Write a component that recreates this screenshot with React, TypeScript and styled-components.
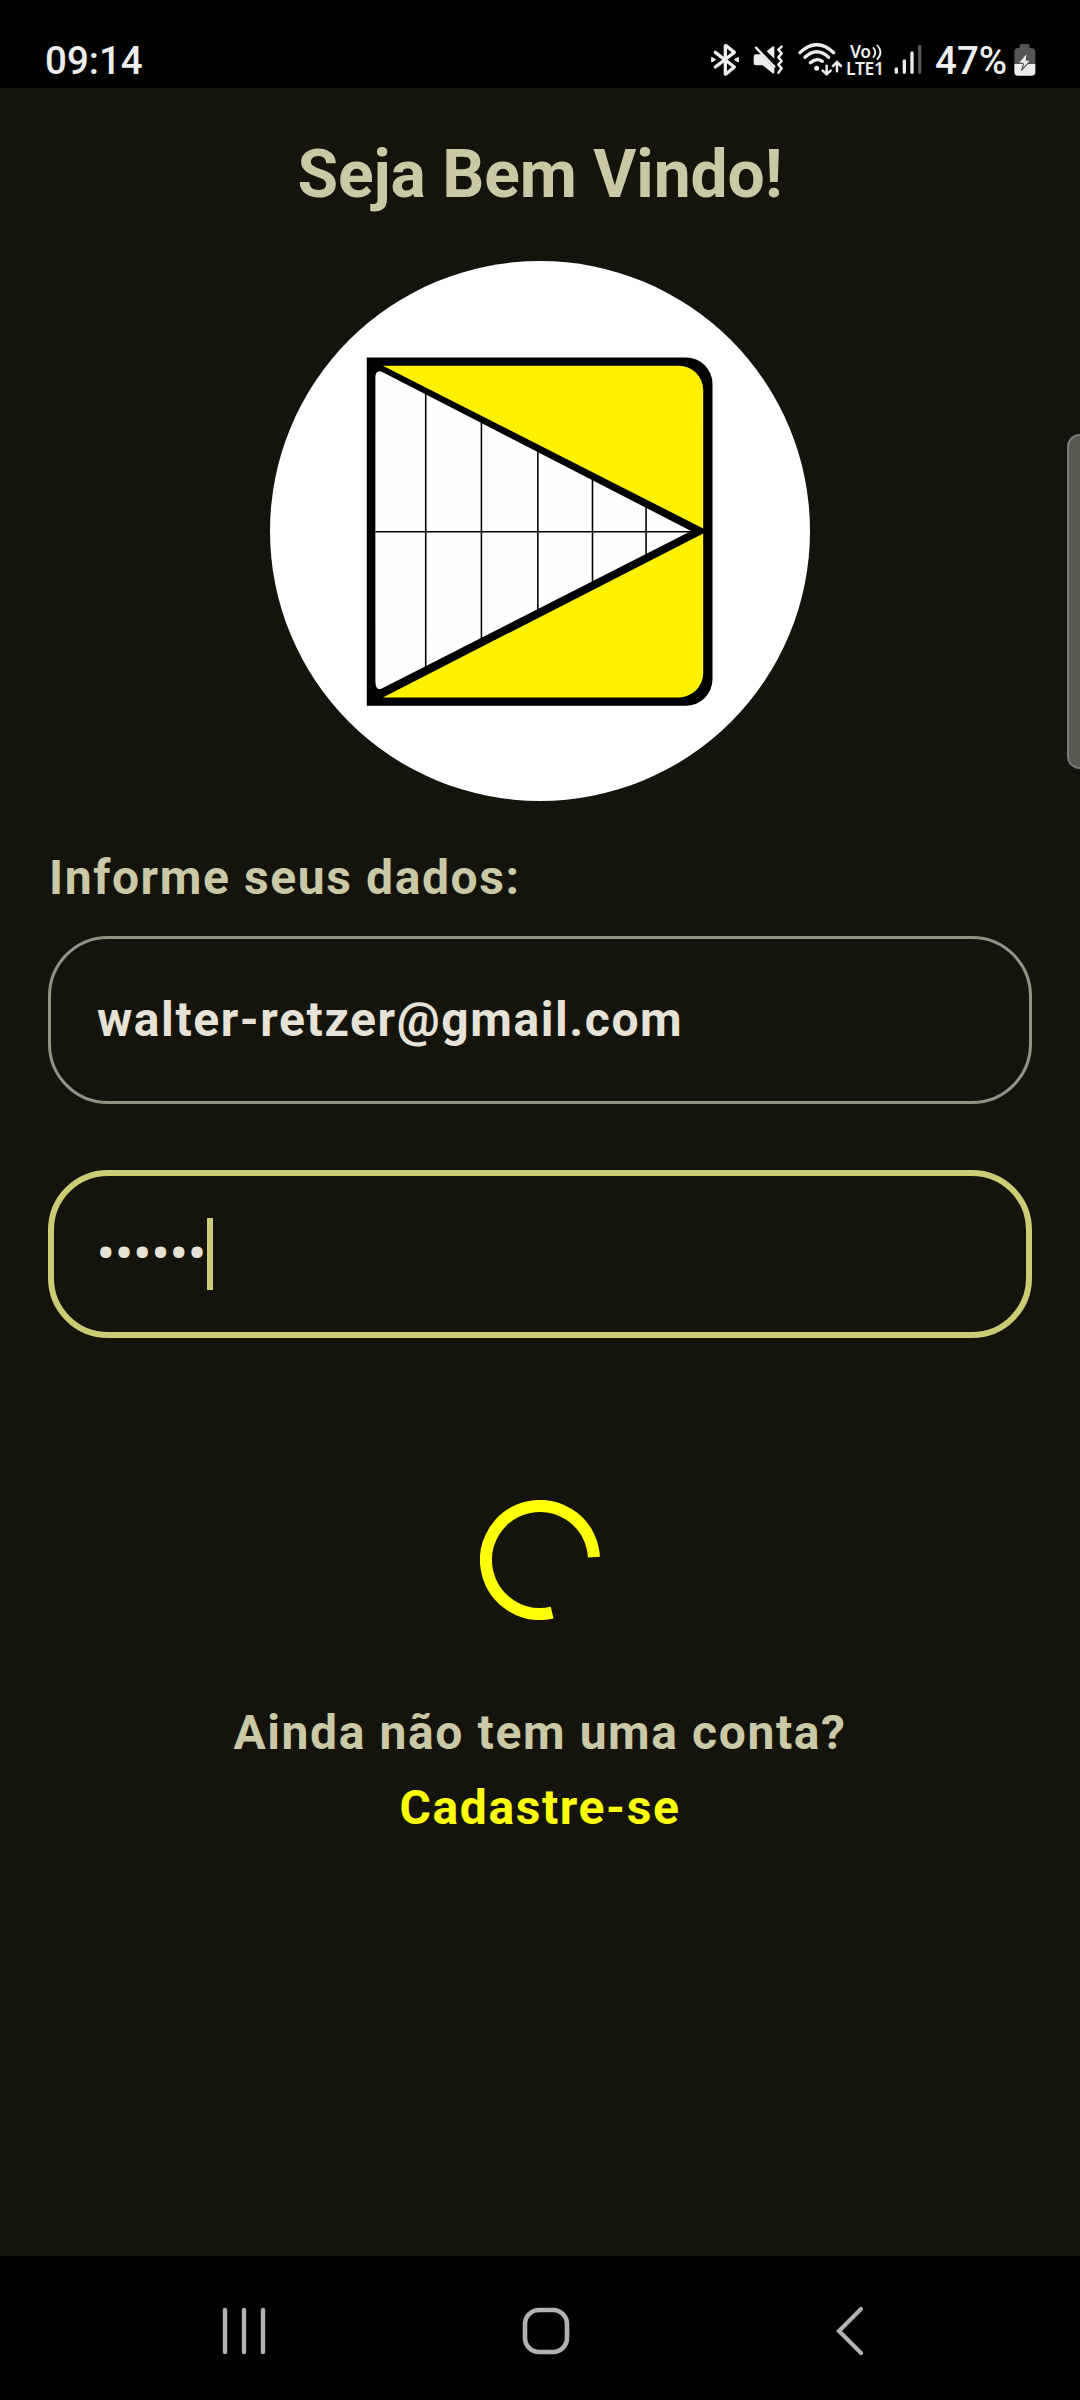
import React from "react";
import styled, { createGlobalStyle } from "styled-components";

const GlobalStyle = createGlobalStyle`
  *, *::before, *::after { box-sizing: border-box; }
  html, body { margin: 0; padding: 0; background: #000; }
  body { font-family: Roboto, "Noto Sans", sans-serif; }
`;

const Screen = styled.div`
  position: relative;
  display: flex;
  flex-direction: column;
  width: 1080px;
  height: 2400px;
  overflow: hidden;
  background: #000;
`;

const StatusBar = styled.header`
  display: flex;
  align-items: center;
  justify-content: space-between;
  flex: none;
  height: 88px;
  padding: 32px 44px 0 45px;
  color: #ededed;
`;

const StatusText = styled.span<{ $width: number }>`
  width: ${(p) => p.$width}px;
  margin-top: 2px;
  font-size: 38.5px;
  font-weight: 500;
  line-height: 46px;
  white-space: nowrap;
`;

const StatusIcons = styled.div`
  display: flex;
  align-items: center;
  height: 46px;
`;

const Glyph = styled.svg<{ $gap: number }>`
  display: block;
  flex: none;
  margin-right: ${(p) => p.$gap}px;
`;

const Volte = styled.div`
  display: flex;
  flex-direction: column;
  width: 40px;
  height: 34px;
  margin-right: 8px;
  font-family: "Noto Sans", sans-serif;
  font-size: 17.5px;
  font-weight: 600;
  line-height: 17px;
  white-space: nowrap;
`;

const VolteTop = styled.div`
  display: flex;
  align-items: center;
  gap: 1px;
  height: 17px;
  padding-left: 4px;
  letter-spacing: -0.4px;
`;

const VolteBottom = styled.div`
  height: 17px;
  letter-spacing: -0.3px;
`;

const Content = styled.main`
  display: flex;
  flex-direction: column;
  align-items: center;
  flex: 1;
  padding: 0 48px;
  background: #14140c;
`;

const Title = styled.h1`
  margin: 45px 0 0;
  font-size: 66px;
  font-weight: 700;
  line-height: 84px;
  letter-spacing: -0.08px;
  color: #cac8a5;
  white-space: nowrap;
`;

const Logo = styled.svg`
  display: block;
  width: 540px;
  height: 540px;
  margin-top: 44px;
  border-radius: 50%;
  background: #fff;
`;

const Form = styled.form`
  display: flex;
  flex-direction: column;
  width: 100%;
  margin-top: 39px;
`;

const BodyText = styled.p<{ $color?: string }>`
  margin: 0;
  font-size: 48px;
  font-weight: 700;
  line-height: 75px;
  letter-spacing: 1.6px;
  white-space: nowrap;
  color: ${(p) => p.$color ?? "#cac8a5"};
`;

const Label = styled(BodyText)`
  padding-left: 1px;
`;

const Value = styled(BodyText)<{ $masked?: boolean }>`
  padding-left: 1px;
  margin-bottom: 1px;
  letter-spacing: ${(p) => (p.$masked ? 1 : 1.58)}px;
`;

const Field = styled.div<{ $focused?: boolean }>`
  display: flex;
  align-items: center;
  height: 168px;
  margin-top: ${(p) => (p.$focused ? 66 : 21)}px;
  padding-left: ${(p) => (p.$focused ? 42 : 45)}px;
  border: ${(p) => (p.$focused ? "6px solid #cccb76" : "3px solid #929282")};
  border-radius: 60px;
`;

const Caret = styled.span`
  width: 6px;
  height: 72px;
  background: #cccb76;
`;

const Spinner = styled.svg`
  display: block;
  width: 120px;
  height: 120px;
  margin: 162px 0 75px;
`;

const EdgeHandle = styled.div`
  position: absolute;
  top: 434px;
  right: -12px;
  width: 25px;
  height: 335px;
  border: 2px solid #7b7b77;
  border-radius: 13px;
  background: #585951;
`;

const NavBar = styled.nav`
  display: flex;
  align-items: center;
  flex: none;
  height: 144px;
  padding: 6px 0 0 221px;
`;

const BluetoothIcon = () => (
  <Glyph $gap={14} width="28" height="34" viewBox="64 69 84 102">
    <g fill="none" stroke="#ededed" strokeWidth="10" strokeLinejoin="round" strokeLinecap="round">
      <path d="M77 97 L134 141 L109 162 L107 162 L107 77 L109 77 L134 97 L77 141" />
    </g>
    <path d="M66 112 L78 119 L66 126Z M146 112 L134 119 L146 126Z" fill="#ededed" stroke="#ededed" strokeWidth="3" strokeLinejoin="round" />
  </Glyph>
);

const MuteIcon = () => (
  <Glyph $gap={14} width="31" height="34" viewBox="190 69 93 102">
    <path d="M199 103 H214 L254 144 V157 Q254 163 248 159 L219 136 H199 Q192 136 192 129 V110 Q192 103 199 103Z" fill="#ededed" />
    <path d="M231 94 L248 80 Q254 76 254 82 V116Z" fill="#ededed" />
    <path d="M199 83 L254 140" stroke="#ededed" strokeWidth="7" strokeLinecap="round" />
    <path d="M276 80 L266 89 L276 100 L266 112 L276 123 L266 134 L276 145 L266 158" fill="none" stroke="#ededed" strokeWidth="7.5" strokeLinecap="round" strokeLinejoin="round" />
  </Glyph>
);

const WifiIcon = () => (
  <Glyph $gap={4} width="44" height="34" viewBox="322 69 132 102">
    <g fill="none" stroke="#ededed" strokeLinecap="round">
      <path d="M328 98 Q378 50 429 98" strokeWidth="10" />
      <path d="M343 112 Q378 79 414 112" strokeWidth="10" />
      <path d="M359 128 Q378 112 395 124" strokeWidth="10" />
      <path d="M408 137 V162 M396 152 L408 163 L420 152" strokeWidth="7.5" />
      <path d="M439 154 V127 M427 138 L439 126 L451 138" strokeWidth="7.5" />
    </g>
    <circle cx="378" cy="145" r="7.5" fill="#ededed" />
  </Glyph>
);

const VolteIcon = () => (
  <Volte>
    <VolteTop>
      <span>Vo</span>
      <Glyph $gap={0} width="11" height="16" viewBox="0 0 11 16">
        <path d="M1.5 4 Q5 8.5 1.5 13 M5.5 1.5 Q11.5 8.5 5.5 15" fill="none" stroke="#ededed" strokeWidth="1.9" strokeLinecap="round" />
      </Glyph>
    </VolteTop>
    <VolteBottom>LTE1</VolteBottom>
  </Volte>
);

const SignalIcon = () => (
  <Glyph $gap={13} width="28" height="34" viewBox="610 69 84 102">
    <g strokeWidth="10" strokeLinecap="round" stroke="#ededed">
      <path d="M617 147 V157" />
      <path d="M641 123 V157" />
      <path d="M664 99 V157" />
      <path d="M687 79 V157" stroke="#555" />
    </g>
  </Glyph>
);

const BatteryIcon = () => (
  <Glyph $gap={0} width="22" height="34" viewBox="971 69 66 102">
    <path d="M993 72 H1013 Q1018 72 1018 77 V84 H1023 Q1035 84 1035 96 V132 H972 V96 Q972 84 984 84 H988 V77 Q988 72 993 72Z" fill="#555" />
    <path d="M972 132 H1035 V156 Q1035 167 1024 167 H983 Q972 167 972 156Z" fill="#ededed" />
    <path d="M1008 103 L987 128 H1000 L996 149 L1020 122 H1006Z" fill="#ededed" />
    <path d="M1020 122 L993 152 L1000 132" fill="none" stroke="#555" strokeWidth="3.5" />
  </Glyph>
);

const BrandLogo = () => (
  <Logo viewBox="28 30 1512 1512">
    <path d="M299 300 H1193 A74 74 0 0 1 1267 374 V1201 A74 74 0 0 1 1193 1275 H299Z" fill="#000" />
    <path d="M344 323 H1172 A69 69 0 0 1 1241 392 V779Z" fill="#fff200" />
    <path d="M344 1252 H1172 A69 69 0 0 0 1241 1183 V793Z" fill="#fff200" />
    <path d="M323 356 Q323 335 341 340 L1207 786 L341 1227 Q323 1235 323 1205Z" fill="#fefefe" />
    <path d="M323 788 H1207 M464 402 V1168 M620 482 V1089 M778 563 V1010" fill="none" stroke="#000" strokeWidth="4.4" />
    <path d="M931 640 V930 M1081 716 V853" fill="none" stroke="#000" strokeWidth="4.4" />
  </Logo>
);

export default function App() {
  return (
    <>
      <GlobalStyle />
      <Screen>
        <StatusBar>
          <StatusText $width={110}>09:14</StatusText>
          <StatusIcons>
            <BluetoothIcon />
            <MuteIcon />
            <WifiIcon />
            <VolteIcon />
            <SignalIcon />
            <StatusText $width={79}>47%</StatusText>
            <BatteryIcon />
          </StatusIcons>
        </StatusBar>
        <Content>
          <Title>Seja Bem Vindo!</Title>
          <BrandLogo />
          <Form>
            <Label>Informe seus dados:</Label>
            <Field>
              <Value $color="#e6e2d5">walter-retzer@gmail.com</Value>
            </Field>
            <Field $focused>
              <Value $color="#e6e2d5" $masked>••••••</Value>
              <Caret />
            </Field>
          </Form>
          <Spinner viewBox="-60 -60 120 120">
            <circle r="54" fill="none" stroke="#ffff0a" strokeWidth="12" pathLength={360} strokeDasharray="280 80" transform="rotate(77)" />
          </Spinner>
          <BodyText>Ainda não tem uma conta?</BodyText>
          <BodyText $color="#ffff0a">Cadastre-se</BodyText>
        </Content>
        <NavBar>
          <Glyph $gap={255} width="46" height="50" viewBox="0 0 46 50">
            <path d="M4 4 V46 M23 4 V46 M42 4 V46" stroke="#b2b2b2" strokeWidth="4.4" strokeLinecap="round" />
          </Glyph>
          <Glyph $gap={265} width="48" height="50" viewBox="0 0 48 50">
            <rect x="3" y="4" width="42" height="42" rx="14" fill="none" stroke="#b2b2b2" strokeWidth="4.6" />
          </Glyph>
          <Glyph $gap={0} width="30" height="50" viewBox="0 0 30 50">
            <path d="M26 3 L4 25 L26 47" fill="none" stroke="#b2b2b2" strokeWidth="4.2" strokeLinecap="round" />
          </Glyph>
        </NavBar>
        <EdgeHandle />
      </Screen>
    </>
  );
}
